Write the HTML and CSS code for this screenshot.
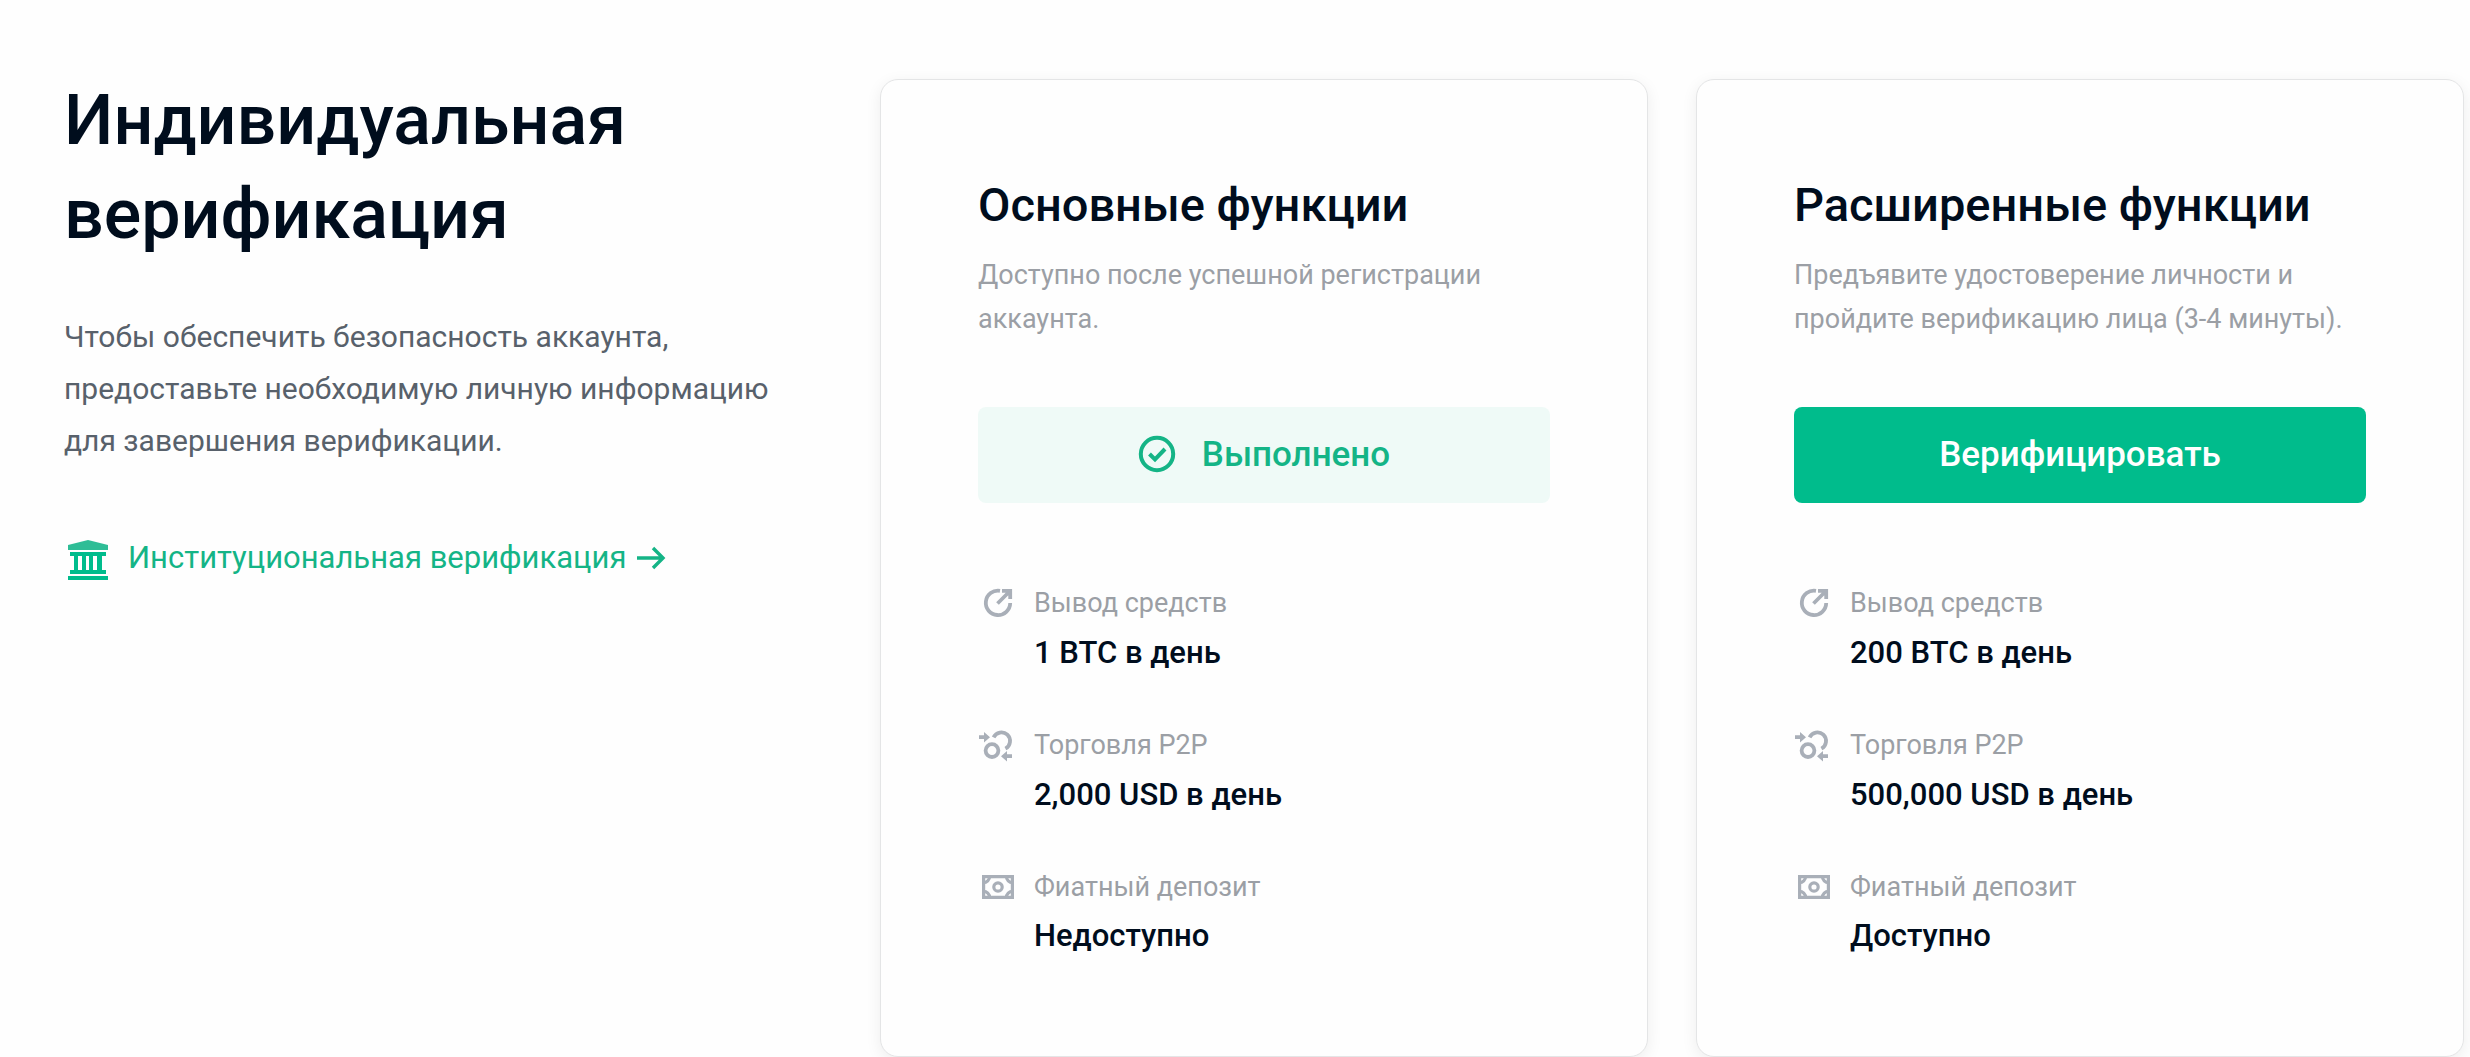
FILE: index.html
```
<!DOCTYPE html>
<html lang="ru">
<head>
<meta charset="utf-8">
<meta name="viewport" content="width=device-width, initial-scale=1">
<title>Индивидуальная верификация</title>
<link rel="stylesheet" href="styles.css">
</head>
<body>
<svg class="sprite" aria-hidden="true">
  <symbol id="icon-withdraw" viewBox="0 0 36 36">
    <g fill="none" stroke="currentColor" stroke-width="3.8">
      <path d="M22 5.8A12.2 12.2 0 1 0 32.2 18"/>
      <path d="M19.5 18.5 32 6M24 5.8h8.200V14"/>
    </g>
  </symbol>
  <symbol id="icon-p2p" viewBox="0 0 36 36">
    <g fill="none" stroke="currentColor" stroke-width="3.8">
      <circle cx="14" cy="23.6" r="6.4"/>
      <path d="M15.6 10.4A8.6 8.6 0 1 1 27.4 21.6"/>
      <path d="M1 10.2h6M34 29.2h-6"/>
    </g>
    <path fill="currentColor" d="M6 5l6 5.2-6 5.2zM29 24l-6 5.2 6 5.2z"/>
  </symbol>
  <symbol id="icon-cash" viewBox="0 0 36 36">
    <g fill="none" stroke="currentColor" stroke-width="3.2">
      <path d="M5.600 7.600h28.800v20.800H5.600z"/>
      <circle cx="20" cy="18" r="4.2"/>
      <path d="M11.6 7.4a6.2 6.2 0 0 1-6.2 6.2M28.4 7.4a6.2 6.2 0 0 0 6.2 6.2M11.6 28.6a6.2 6.2 0 0 0-6.2-6.2M28.4 28.6a6.2 6.2 0 0 1 6.2-6.2"/>
    </g>
  </symbol>
</svg>

<main class="page">
  <section class="intro">
    <h1 class="intro-title">Индивидуальная верификация</h1>
    <p class="intro-text">Чтобы обеспечить безопасность аккаунта, предоставьте необходимую личную информацию для завершения верификации.</p>
    <a class="intro-link" href="#institutional">
      <svg class="icon-bank" viewBox="0 0 48 40" aria-hidden="true">
        <path fill="#2ebd96" d="M4 12V7L24 2l20 5v5z"/>
        <path fill="#00bc8c" d="M6 14h36v4h-4v14h4v4H6v-4h4V18H6zM14 18v14h4V18zM22 18v14h3V18zM29 18v14h4V18z" fill-rule="evenodd"/>
        <path fill="#00bc8c" d="M4 38h40v4H4z"/>
      </svg>
      <span>Институциональная верификация</span>
      <svg class="icon-arrow" viewBox="0 0 30 24" aria-hidden="true"><path d="M1 12h26M17 2l10 10-10 10" fill="none" stroke="currentColor" stroke-width="3.4"/></svg>
    </a>
  </section>

  <section class="card">
    <h2 class="card-title">Основные функции</h2>
    <p class="card-text">Доступно после успешной регистрации аккаунта.</p>
    <div class="action action-done">
      <svg class="icon-check" viewBox="0 0 38 38" aria-hidden="true"><g fill="none" stroke="currentColor" stroke-width="4"><circle cx="19" cy="19" r="16.2"/><path d="M11.500 19l5.500 5.500L27 14"/></g></svg>
      <span>Выполнено</span>
    </div>
    <dl class="limits">
      <div class="limit">
        <dt><svg class="icon" aria-hidden="true"><use href="#icon-withdraw"/></svg>Вывод средств</dt>
        <dd>1 BTC в день</dd>
      </div>
      <div class="limit">
        <dt><svg class="icon" aria-hidden="true"><use href="#icon-p2p"/></svg>Торговля P2P</dt>
        <dd>2,000 USD в день</dd>
      </div>
      <div class="limit">
        <dt><svg class="icon" aria-hidden="true"><use href="#icon-cash"/></svg>Фиатный депозит</dt>
        <dd>Недоступно</dd>
      </div>
    </dl>
  </section>

  <section class="card">
    <h2 class="card-title">Расширенные функции</h2>
    <p class="card-text">Предъявите удостоверение личности и пройдите верификацию лица (3-4 минуты).</p>
    <button class="action action-verify" type="button">Верифицировать</button>
    <dl class="limits">
      <div class="limit">
        <dt><svg class="icon" aria-hidden="true"><use href="#icon-withdraw"/></svg>Вывод средств</dt>
        <dd>200 BTC в день</dd>
      </div>
      <div class="limit">
        <dt><svg class="icon" aria-hidden="true"><use href="#icon-p2p"/></svg>Торговля P2P</dt>
        <dd>500,000 USD в день</dd>
      </div>
      <div class="limit">
        <dt><svg class="icon" aria-hidden="true"><use href="#icon-cash"/></svg>Фиатный депозит</dt>
        <dd>Доступно</dd>
      </div>
    </dl>
  </section>
</main>
</body>
</html>
```
FILE: styles.css
```
* {
  box-sizing: border-box;
}

body {
  margin: 0;
  background: #fefefe;
  color: #000d1d;
  font-family: Roboto, "Liberation Sans", sans-serif;
}

h1, h2, p, dl, dd {
  margin: 0;
}

.sprite {
  display: none;
}

.page {
  display: grid;
  grid-template-columns: repeat(3, minmax(0, 1fr));
  gap: 48px;
  padding: 73px 6px 0 64px;
}

.intro {
  padding-right: 32px;
}

.intro-title {
  font-size: 70px;
  line-height: 94px;
  font-weight: 500;
}

.intro-text {
  margin-top: 50px;
  color: #58616b;
  font-size: 30px;
  line-height: 52px;
}

.intro-link {
  display: inline-flex;
  align-items: center;
  margin-top: 71px;
  color: #14b486;
  font-size: 31px;
  line-height: 40px;
  text-decoration: none;
}

.icon-bank {
  width: 48px;
  height: 40px;
  margin-right: 16px;
  overflow: visible;
}

.icon-arrow {
  width: 30px;
  height: 24px;
  margin-left: 10px;
}

.card {
  margin-top: 6px;
  padding: 97px 97px 95px;
  border: 1px solid #e4e5e6;
  border-radius: 18px;
  background: #fefefe;
  box-shadow: 0 4px 16px rgba(0, 0, 0, 0.07);
}

.card-title {
  font-size: 47px;
  line-height: 56px;
  font-weight: 500;
}

.card-text {
  margin-top: 20px;
  color: #9b9fa5;
  font-size: 27px;
  line-height: 44px;
}

.action {
  display: flex;
  align-items: center;
  justify-content: center;
  gap: 26px;
  width: 100%;
  height: 96px;
  margin-top: 66px;
  padding: 0 0 2px;
  border: 0;
  border-radius: 8px;
  font-family: inherit;
  font-size: 35px;
  font-weight: 500;
}

.action-done {
  background: #effaf7;
  color: #14b486;
}

.action-verify {
  background: #00bc8c;
  color: #fff;
  cursor: pointer;
}

.icon-check {
  width: 38px;
  height: 38px;
}

.limits {
  display: grid;
  gap: 44px;
  margin-top: 78px;
}

.limit dt {
  display: flex;
  align-items: center;
  gap: 20px;
  color: #9b9fa5;
  font-size: 27px;
  line-height: 44px;
}

.limit dd {
  padding: 2px 0 0 56px;
  font-size: 31px;
  line-height: 52px;
  font-weight: 500;
}

.limit:last-child dd {
  line-height: 50px;
}

.icon {
  width: 36px;
  height: 36px;
  color: #a9afb8;
}
```
